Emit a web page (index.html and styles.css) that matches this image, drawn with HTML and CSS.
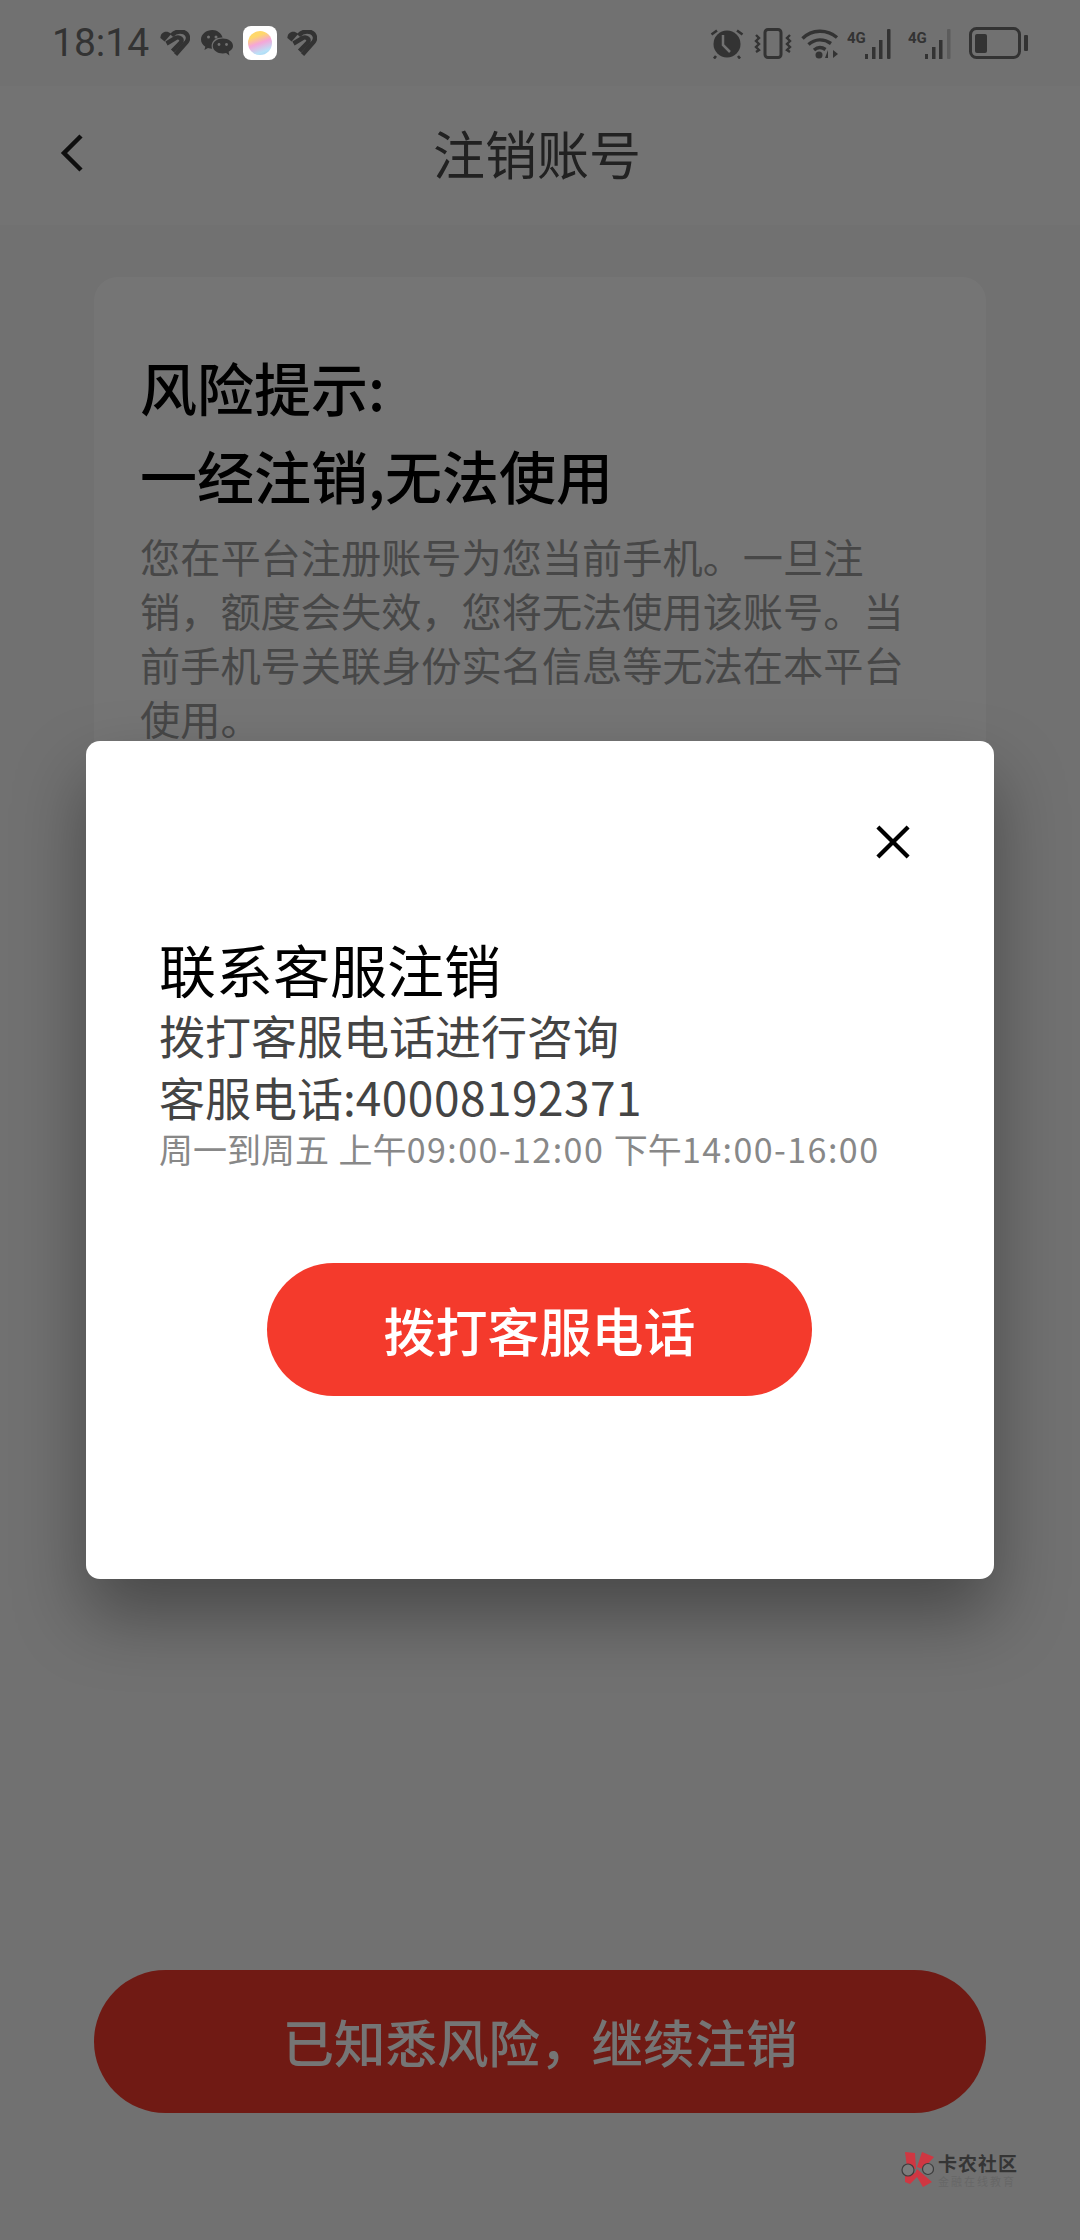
FILE: index.html
```html
<!DOCTYPE html>
<html lang="zh-CN">
<head>
    <meta charset="UTF-8">
    <meta name="viewport" content="width=device-width, initial-scale=1.0">
    <title>注销账号</title>
    <link rel="stylesheet" href="styles.css">
</head>
<body>
    <div class="page">
        <div class="status-bar">
            <div class="status-left">
                <span class="time">18:14</span>
                <svg class="icon-heart" viewBox="0 0 30 26">
                    <path class="dark-fill" d="M.4 8C.2 3.500 4 1 7.500 1.800 9 2.200 10.200 3 11 4.200L4.600 11.400z"/>
                    <path class="dark-line" d="M11.500 5.500C15 1.700 20 1 24 2.200 28.500 4 29 9 26.500 12L15.500 24.500"/>
                    <path class="dark-line" d="M6.500 13.500 16 7.800C19.500 6.300 23 9.500 20.800 12.500L12.500 21"/>
                </svg>
                <svg class="icon-wechat" viewBox="0 0 32 26">
                    <path class="dark-fill" d="M11.500 0C5.200 0 0 4.200 0 9.400c0 3 1.700 5.500 4.300 7.300L3.400 20l3.600-1.900c1.300.4 2.700.6 4.100.7-.3-.9-.5-1.800-.5-2.700C10.600 11 15 7.600 20.600 7.600h1C20.300 3.200 16.300 0 11.500 0z"/>
                    <path class="dark-fill" d="M32 16c0-4.300-4.200-7.500-10.200-7.500-5.500 0-10 3.300-10 7.500s4.500 7.500 10 7.500c1.200 0 2.300-.2 3.300-.5l3.300 2.500-.8-3.700c2.700-1.400 4.400-3.500 4.400-5.800z"/>
                    <circle class="hole" cx="7.500" cy="7" r="1.500"/>
                    <circle class="hole" cx="15" cy="7" r="1.500"/>
                    <circle class="hole" cx="18" cy="14.500" r="1.400"/>
                    <circle class="hole" cx="25.500" cy="14.500" r="1.400"/>
                </svg>
                <div class="app-icon"><div class="app-ball"></div></div>
                <svg class="icon-heart" viewBox="0 0 30 26">
                    <path class="dark-fill" d="M.4 8C.2 3.500 4 1 7.500 1.800 9 2.200 10.200 3 11 4.200L4.600 11.400z"/>
                    <path class="dark-line" d="M11.500 5.500C15 1.700 20 1 24 2.200 28.500 4 29 9 26.500 12L15.500 24.500"/>
                    <path class="dark-line" d="M6.500 13.500 16 7.800C19.500 6.300 23 9.500 20.800 12.500L12.500 21"/>
                </svg>
            </div>
            <div class="status-right">
                <svg class="icon-alarm" viewBox="0 0 34 31">
                    <circle class="dark-fill" cx="17" cy="16" r="13.500"/>
                    <path class="alarm-hand" d="M13 7v10l7 7"/>
                    <path class="alarm-ear" d="M1.500 6.500 7 2.500M32.500 6.500 27 2.500M6 28l-2 2.500M28 28l2 2.500"/>
                </svg>
                <svg class="icon-vibrate" viewBox="0 0 38 31">
                    <rect class="dark-outline" x="11" y="1.500" width="16" height="28" rx="3"/>
                    <path class="dark-zig" d="M2 7l3 3-3 3 3 3-3 3 3 3-3 2M36 7l-3 3 3 3-3 3 3 3-3 3 3 2"/>
                </svg>
                <svg class="icon-wifi" viewBox="0 0 38 31">
                    <path class="wifi-arc" d="M1.500 10.500C11 1 26 1 36 9.500M7.500 16.500C14 10.500 23 10.500 30 15.500M13 22c3.500-3 8-3 11.500-.5"/>
                    <circle class="dark-fill" cx="18" cy="27" r="3.500"/>
                    <path class="dark-fill" d="M27 30v-8l-3 8zM32 22v8l5-4z"/>
                </svg>
                <svg class="icon-signal" viewBox="0 0 50 31">
                    <text class="signal-label" x="0" y="15">4G</text>
                    <rect class="dark-fill" x="18" y="26" width="3" height="5"/>
                    <rect class="dark-fill" x="25" y="19" width="3.500" height="12"/>
                    <rect class="dark-fill" x="32" y="12" width="3.500" height="19"/>
                    <rect class="dark-fill" x="40" y="1" width="3.500" height="30" rx="1"/>
                </svg>
                <svg class="icon-signal" viewBox="0 0 50 31">
                    <text class="signal-label" x="0" y="15">4G</text>
                    <rect class="dark-fill" x="17" y="26" width="3" height="5"/>
                    <rect class="dark-fill" x="24" y="19" width="3.500" height="12"/>
                    <rect class="dark-fill" x="31" y="12" width="3.500" height="19"/>
                    <rect class="signal-off" x="39" y="1" width="3.500" height="30" rx="1"/>
                </svg>
                <svg class="icon-battery" viewBox="0 0 60 32">
                    <rect class="dark-outline" x="1.500" y="1.500" width="49" height="29" rx="6"/>
                    <rect class="dark-fill" x="6" y="7" width="12" height="19" rx="2"/>
                    <rect class="dark-fill" x="55" y="8" width="4" height="16" rx="1"/>
                </svg>
            </div>
        </div>

        <div class="nav">
            <svg class="back" viewBox="0 0 24 40">
                <path d="M21 3 4 20l17 17"/>
            </svg>
            <div class="nav-title">注销账号</div>
        </div>

        <div class="card">
            <h2 class="card-title">风险提示:</h2>
            <h2 class="card-title">一经注销,无法使用</h2>
            <p class="card-text">您在平台注册账号为您当前手机。一旦注<br>销&#xFF0C;额度会失效&#xFF0C;您将无法使用该账号。当<br>前手机号关联身份实名信息等无法在本平台<br>使用。</p>
        </div>

        <button class="continue-btn">已知悉风险&#xFF0C;继续注销</button>

        <div class="overlay">
            <div class="modal">
                <div class="modal-top">
                    <svg class="close" viewBox="0 0 36 36">
                        <path d="M2 2l32 32M34 2 2 34"/>
                    </svg>
                </div>
                <div class="modal-title">联系客服注销</div>
                <div class="modal-line">拨打客服电话进行咨询</div>
                <div class="modal-line">客服电话:<span class="phone">40008192371</span></div>
                <div class="modal-hours">周一到周五 上午<span class="hours-range">09:00-12:00</span> 下午<span class="hours-range">14:00-16:00</span></div>
                <button class="call-btn">拨打客服电话</button>
            </div>
        </div>

        <div class="watermark">
            <svg class="watermark-mark" viewBox="0 0 34 36">
                <path class="mark-red" d="M5 0l10 1 1 16-9-2z"/>
                <path class="mark-red" d="M22 0l12 5-11 12-6-2z"/>
                <path class="mark-red" d="M5 23l10-2 2-4 15 13-9 5-6-10-7 7-5-2z"/>
                <circle class="mark-lens" cx="8" cy="18" r="6"/>
                <circle class="mark-lens" cx="28" cy="17" r="5.500"/>
            </svg>
            <div class="watermark-text">
                <div class="watermark-name">卡农社区</div>
                <div class="watermark-sub">金融在线教育</div>
            </div>
        </div>
    </div>
</body>
</html>
```

FILE: styles.css
```css
* {
    margin: 0;
    padding: 0;
    box-sizing: border-box;
}

body {
    font-family: "Noto Sans CJK SC", "Noto Sans", sans-serif;
    background: #f6f6f6;
}

.page {
    position: relative;
    width: 1080px;
    height: 2240px;
    overflow: hidden;
    display: flex;
    flex-direction: column;
    background: #f6f6f6;
}

/* status bar sits above the dim layer, the app icon stays bright in it */
.status-bar {
    position: relative;
    z-index: 3;
    height: 86px;
    flex-shrink: 0;
    padding: 0 52px;
    display: flex;
    align-items: center;
    justify-content: space-between;
    color: #333;
}

.status-left,
.status-right {
    display: flex;
    align-items: center;
}

.time {
    font-family: "Roboto", sans-serif;
    font-size: 39px;
    width: 108px;
    color: #333;
}

.icon-heart {
    width: 30px;
    height: 26px;
}

.icon-wechat {
    width: 32px;
    height: 26px;
    margin: 0 10px 0 11px;
}

.app-icon {
    width: 34px;
    height: 34px;
    margin-right: 10px;
    border-radius: 8px;
    background: #fff;
    display: flex;
    align-items: center;
    justify-content: center;
}

.app-ball {
    width: 24px;
    height: 24px;
    border-radius: 50%;
    background: linear-gradient(160deg, #ffd86b 0%, #ffd86b 25%, #f5a6d8 50%, #b9e2f8 80%, #9fd3f2 100%);
}

.dark-fill {
    fill: #333;
}

.dark-line {
    fill: none;
    stroke: #333;
    stroke-width: 4.4;
}

.dark-outline {
    fill: none;
    stroke: #333;
    stroke-width: 3;
}

.dark-zig {
    fill: none;
    stroke: #333;
    stroke-width: 2.4;
}

.hole {
    fill: #727272;
}

.status-right {
    margin-right: -1px;
}

.icon-alarm {
    width: 34px;
    height: 31px;
    margin-right: 10px;
}

.alarm-hand {
    fill: none;
    stroke: #727272;
    stroke-width: 2.5;
}

.alarm-ear {
    fill: none;
    stroke: #333;
    stroke-width: 2.6;
}

.icon-vibrate {
    width: 38px;
    height: 31px;
    margin-right: 9px;
}

.icon-wifi {
    width: 38px;
    height: 31px;
    margin-right: 8px;
}

.wifi-arc {
    fill: none;
    stroke: #333;
    stroke-width: 3.4;
}

.icon-signal {
    width: 50px;
    height: 31px;
    margin-right: 11px;
}

.signal-label {
    font-family: "Roboto", sans-serif;
    font-size: 15px;
    font-weight: 700;
    fill: #333;
}

.signal-off {
    fill: #5c5c5c;
}

.icon-battery {
    width: 60px;
    height: 32px;
}

.nav {
    height: 139px;
    flex-shrink: 0;
    padding-bottom: 6px;
    background: #fbfbfb;
    display: grid;
    grid-template-columns: 1fr auto 1fr;
    align-items: center;
}

.back {
    width: 24px;
    height: 40px;
    margin-left: 60px;
}

.back path {
    fill: none;
    stroke: #222;
    stroke-width: 4.5;
}

.nav-title {
    font-size: 52px;
    line-height: 70px;
    color: #484848;
    transform: translateX(-3px);
}

.card {
    margin: 52px 94px 0;
    padding: 65px 46px 70px;
    background: #fff;
    border-radius: 24px;
}

.card-title {
    font-size: 57px;
    font-weight: 500;
    line-height: 88px;
    color: #000;
}

.card-text {
    margin-top: 11px;
    font-size: 40.2px;
    line-height: 54px;
    color: #9c9c9c;
}

.continue-btn {
    margin: auto 94px 127px;
    height: 143px;
    padding-bottom: 2px;
    flex-shrink: 0;
    border: none;
    border-radius: 72px;
    background: #f43a2c;
    color: #fff;
    font-family: inherit;
    font-size: 51.5px;
    font-weight: 500;
}

.overlay {
    position: absolute;
    inset: 0;
    z-index: 2;
    padding-top: 741px;
    display: flex;
    justify-content: center;
    align-items: flex-start;
    background: rgba(0, 0, 0, 0.54);
}

.modal {
    width: 908px;
    height: 838px;
    padding: 84px 84px 0 73px;
    background: #fff;
    border-radius: 14px;
    box-shadow: 0 36px 70px rgba(0, 0, 0, 0.36);
    display: flex;
    flex-direction: column;
}

.modal-top {
    height: 108px;
    display: flex;
    justify-content: flex-end;
}

.close {
    width: 34px;
    height: 34px;
}

.close path {
    fill: none;
    stroke: #000;
    stroke-width: 4.5;
}

.modal-title {
    font-size: 57px;
    line-height: 70px;
    color: #000;
}

.modal-line {
    font-size: 46px;
    line-height: 62px;
    color: #444;
}

.phone {
    letter-spacing: 0.5px;
}

.modal-hours {
    font-size: 34px;
    line-height: 44px;
    word-spacing: 2px;
    white-space: nowrap;
    color: #888;
}

.hours-range {
    letter-spacing: 1.45px;
}

.call-btn {
    align-self: center;
    margin: 92px 0 0 10px;
    width: 545px;
    height: 133px;
    flex-shrink: 0;
    border: none;
    border-radius: 67px;
    background: #f43a2c;
    color: #fff;
    font-family: inherit;
    font-size: 52px;
    font-weight: 500;
}

/* forum watermark stamped on the screenshot */
.watermark {
    position: absolute;
    z-index: 4;
    left: 900px;
    top: 2152px;
    display: flex;
    gap: 4px;
}

.watermark-mark {
    width: 34px;
    height: 36px;
}

.mark-red {
    fill: #cf3742;
}

.mark-lens {
    fill: #7c7c7c;
    stroke: #3d3d3d;
    stroke-width: 1.2;
}

.watermark-name {
    font-size: 19px;
    font-weight: 700;
    line-height: 22px;
    letter-spacing: 1px;
    color: #353535;
}

.watermark-sub {
    font-size: 11px;
    line-height: 14px;
    letter-spacing: 2px;
    color: #676767;
}
```
